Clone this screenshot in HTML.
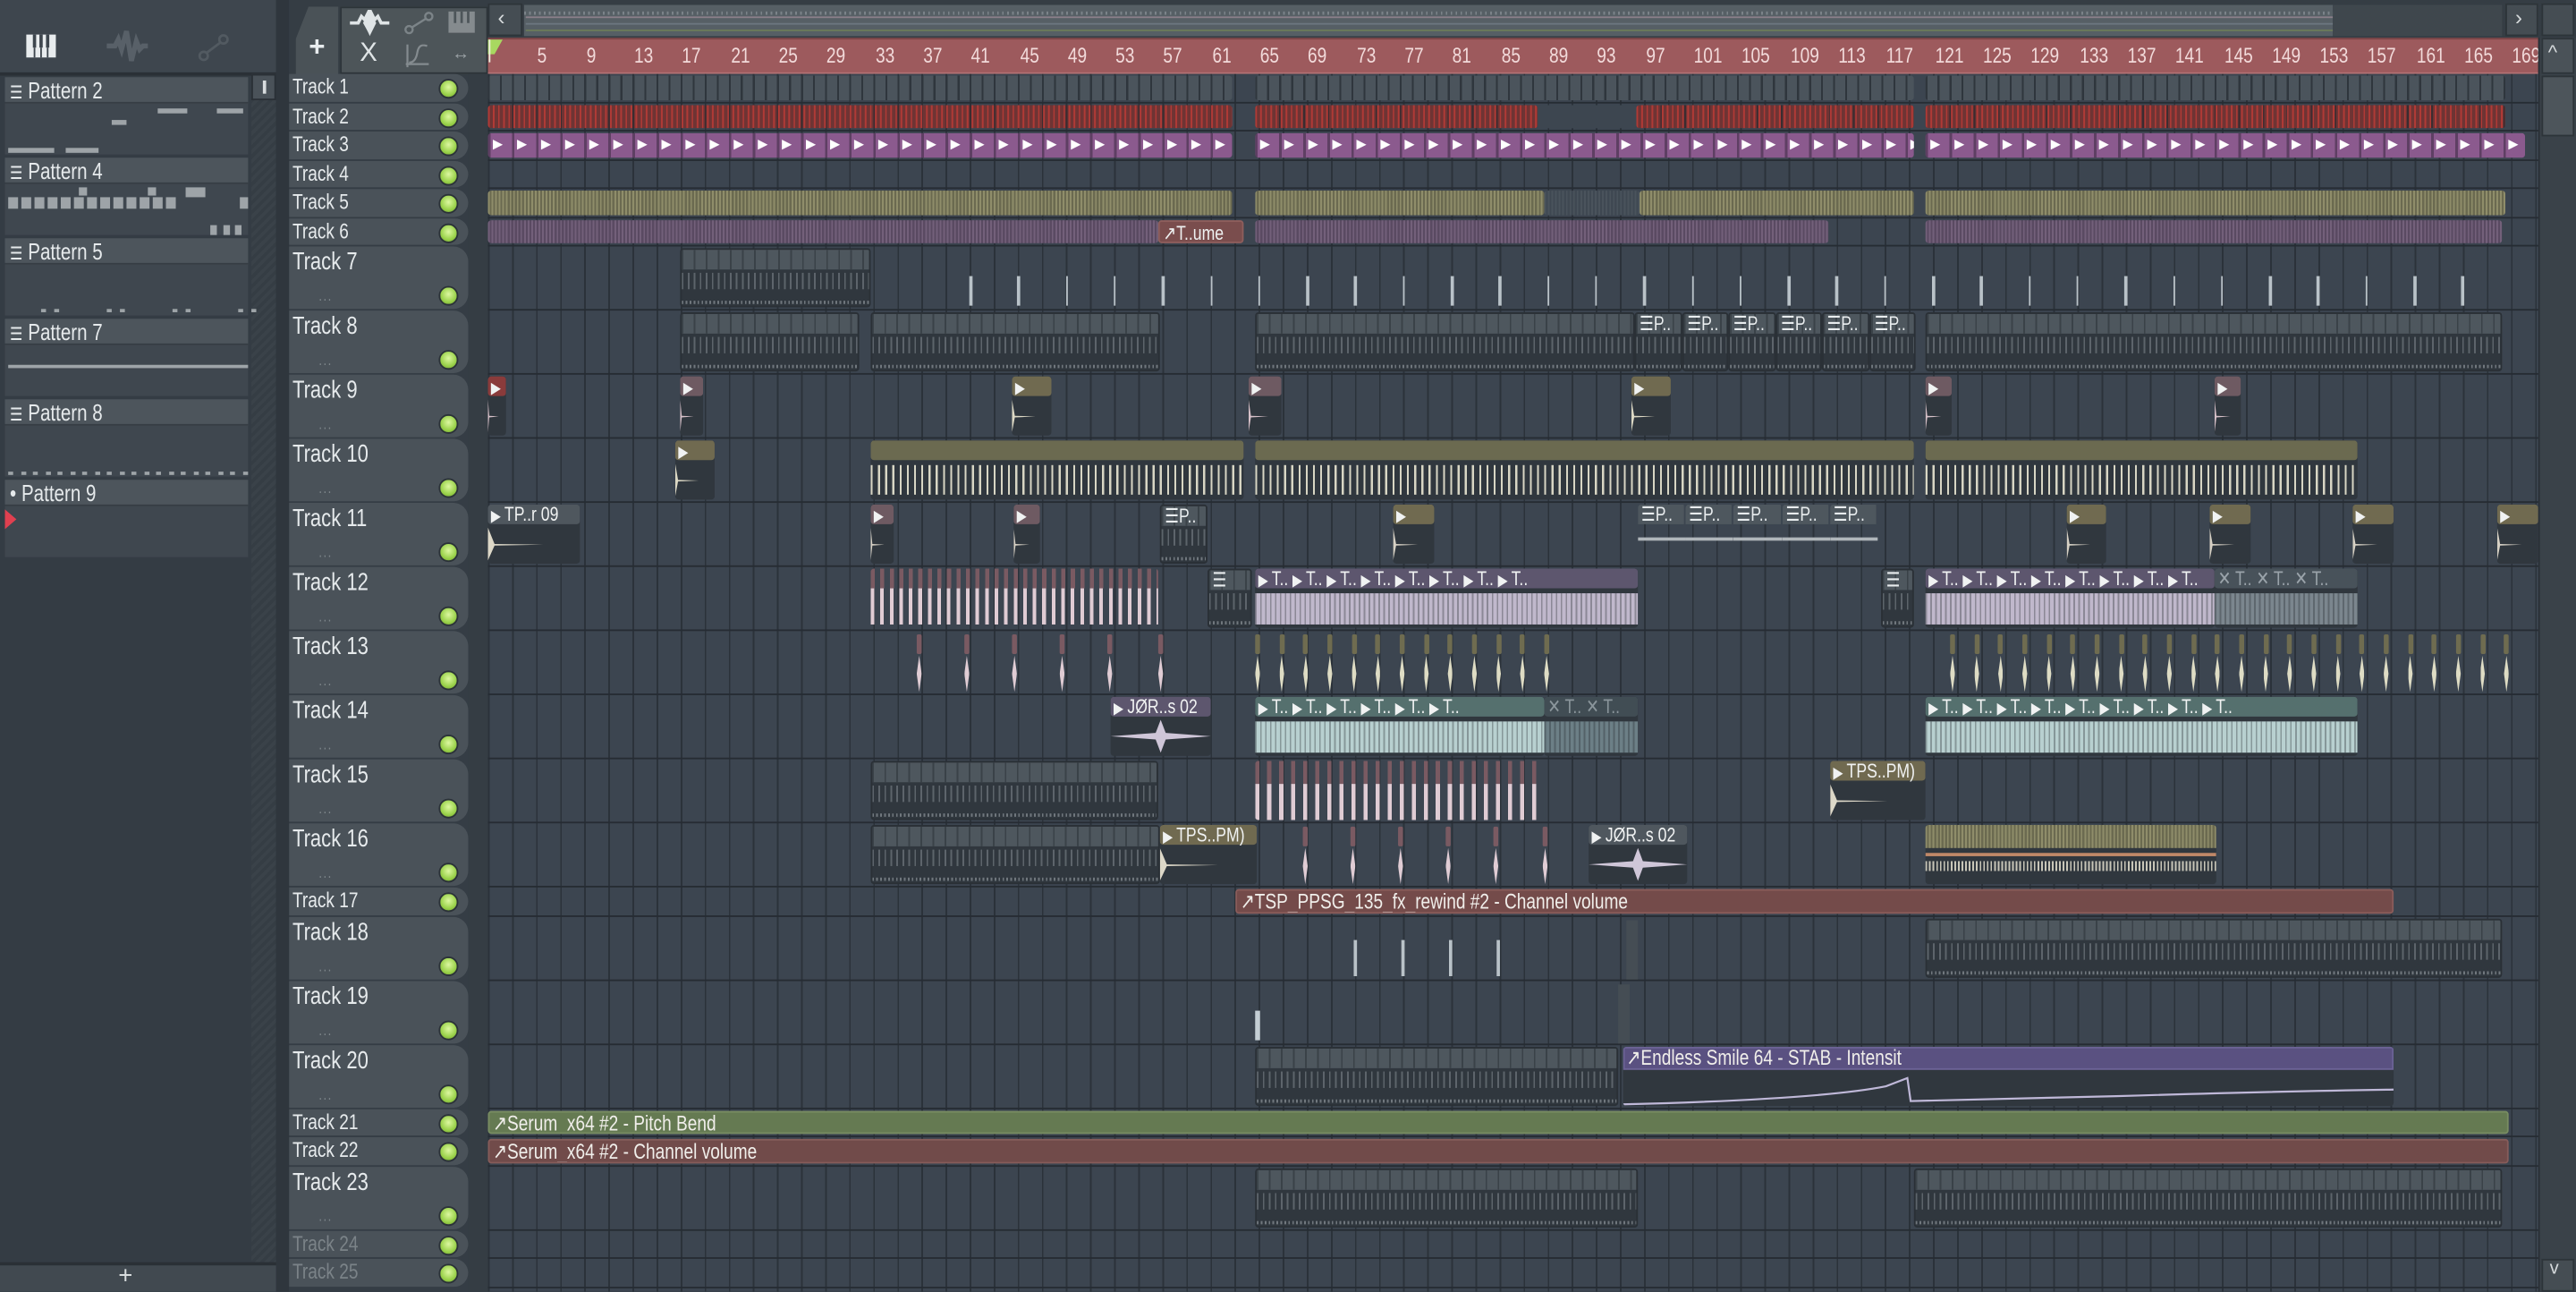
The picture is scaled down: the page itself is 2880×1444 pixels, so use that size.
<!DOCTYPE html>
<html><head><meta charset="utf-8">
<style>
*{margin:0;padding:0;box-sizing:border-box}
html,body{width:2880px;height:1444px;overflow:hidden;background:#353d45}
#w{position:absolute;left:0;top:0;width:1568px;height:786px;transform:scale(1.836735);transform-origin:0 0;font-family:"Liberation Sans Narrow","Liberation Sans",sans-serif;overflow:hidden;background:#353d45}
.a{position:absolute}
.t{color:#e4e8ea;white-space:nowrap;overflow:hidden}
.sx{display:inline-block;transform:scaleX(.8);transform-origin:0 50%;white-space:nowrap}
#grid{position:absolute;left:297px;top:45px;width:1248px;height:741px;background-color:#3c4550;
background-image:repeating-linear-gradient(90deg,#2b323a 0 1px,transparent 1px 14.66px);}
</style></head><body><div id="w">

<!-- left panel -->
<div class="a" style="left:0;top:0;width:176px;height:46px;background:#3e464e;border-bottom:2px solid #2a3036"></div>
<svg class="a" style="left:15px;top:20px" width="20" height="16" viewBox="0 0 20 16"><path d="M1 1h18v14H1z" fill="#e8ecee"/><path d="M6 1v8M10 1v8M14 1v8" stroke="#3e464e" stroke-width="2"/><path d="M6 9v6M10 9v6M14 9v6" stroke="#3e464e" stroke-width="1"/></svg>
<svg class="a" style="left:64px;top:18px" width="26" height="20" viewBox="0 0 26 20"><path d="M1 10h5l2-4 2 6 3-11 3 18 3-12 2 5 2-2h4" stroke="#586068" stroke-width="3" fill="none"/></svg>
<svg class="a" style="left:120px;top:20px" width="20" height="18" viewBox="0 0 20 18"><circle cx="4" cy="14" r="2.5" stroke="#525a61" stroke-width="1.5" fill="none"/><circle cx="16" cy="4" r="2.5" stroke="#525a61" stroke-width="1.5" fill="none"/><path d="M6 12l8-6" stroke="#525a61" stroke-width="1.5"/></svg>
<div class="a" style="left:0;top:46px;width:168px;height:722px;background:#343c44"></div>
<div class="a" style="left:153px;top:46px;width:15px;height:722px;background:repeating-linear-gradient(135deg,#3a4249 0 2px,#353d44 2px 4px)"></div>
<div class="a" style="left:153px;top:45px;width:15px;height:16px;background:#4a5259;border:1px solid #2a3036"><div class="a" style="left:6px;top:3px;width:2px;height:8px;background:#d8dcde"></div></div>
<div id="pl"></div>
<div class="a" style="left:0;top:768px;width:176px;height:18px;background:#414950;border-top:2px solid #2a3036"></div>
<div class="a t" style="left:72px;top:768px;font-size:15px;color:#d8dcde">+</div>
<div class="a" style="left:168px;top:0;width:8px;height:786px;background:#2f363d"></div>

<!-- playlist toolbar -->
<div class="a" style="left:176px;top:0;width:1392px;height:46px;background:#353d44"></div>
<div class="a" style="left:180px;top:4px;width:26px;height:44px;background:#4a5257;border-radius:7px 0 0 0;clip-path:polygon(30% 0,100% 0,100% 100%,0 100%,0 45%)"></div>
<div class="a t" style="left:188px;top:19px;font-size:17px;font-weight:bold;color:#e8ecee;font-family:'Liberation Sans',sans-serif">+</div>
<div class="a" style="left:207px;top:4px;width:90px;height:41px;background:#4d5559;border:1px solid #2d3439"></div>
<svg class="a" style="left:212px;top:6px" width="26" height="16" viewBox="0 0 26 16"><path d="M1 8h5l2-4 2 2 3-6 3 6 2-2 2 4h5" stroke="#dfe4e6" stroke-width="2" fill="none"/><path d="M9 8q4-9 4-8q0 1 4 8q-4 8-4 8q0-1-4-8z" fill="#dfe4e6"/></svg>
<svg class="a" style="left:246px;top:7px" width="18" height="14" viewBox="0 0 18 14"><circle cx="3" cy="11" r="2.2" stroke="#7c8488" stroke-width="1.3" fill="none"/><circle cx="15" cy="3" r="2.2" stroke="#7c8488" stroke-width="1.3" fill="none"/><path d="M5 9.5l8-5" stroke="#7c8488" stroke-width="1.3"/></svg>
<svg class="a" style="left:272px;top:6px" width="18" height="14" viewBox="0 0 18 14"><path d="M1 1h16v13H1z" fill="#858b8e"/><path d="M5 1v7M9 1v7M13 1v7" stroke="#4d5559" stroke-width="1.5"/></svg>
<div class="a t" style="left:219px;top:24px;font-size:16px;color:#dfe4e6">X</div>
<svg class="a" style="left:246px;top:27px" width="16" height="14" viewBox="0 0 16 14"><path d="M2 0v14M1 12h14M3 11q4 0 5-6t6-4" stroke="#848b8f" stroke-width="1.2" fill="none"/></svg>
<div class="a t" style="left:275px;top:27px;font-size:11px;color:#9aa1a5">&#8596;</div>
<div class="a" style="left:297px;top:2px;width:21px;height:20px;background:#454d53;border:1px solid #2d3439"></div>
<div class="a t" style="left:303px;top:3px;font-size:13px;color:#d6dadc">&lsaquo;</div>
<div class="a" style="left:319px;top:3px;width:1101px;height:19px;background:#565f65;background-image:repeating-linear-gradient(90deg,#7b8389 0 1px,transparent 1px 3px);background-size:100% 2px;background-repeat:no-repeat;background-position:0 4px"></div>
<div class="a" style="left:320px;top:10px;width:1100px;height:1px;background:#8a7f8a"></div>
<div class="a" style="left:320px;top:14px;width:1100px;height:1px;background:#6c7680"></div>
<div class="a" style="left:320px;top:18px;width:1100px;height:1px;background:#6b7a5a"></div>
<div class="a" style="left:1420px;top:3px;width:103px;height:19px;background:#3f474d"></div>
<div class="a" style="left:1525px;top:2px;width:20px;height:20px;background:#454d53;border:1px solid #2d3439"></div>
<div class="a t" style="left:1531px;top:3px;font-size:13px;color:#d6dadc">&rsaquo;</div>
<div class="a" style="left:1547px;top:2px;width:20px;height:20px;background:#454d53;border:1px solid #2d3439"></div>

<!-- ruler -->
<div class="a" style="left:297px;top:23px;width:1248px;height:22px;background:#9d5a5d;border-bottom:1px solid #b27174;border-top:1px solid #7b4547"></div>
<div id="ruler"></div>
<svg class="a" style="left:297px;top:24px" width="10" height="14" viewBox="0 0 10 14"><path d="M0 0h9l-5 9H0z" fill="#a8d860"/><path d="M1 0v14" stroke="#f0f0e0" stroke-width="1"/></svg>
<!-- right scrollbar -->
<div class="a" style="left:1545px;top:23px;width:23px;height:763px;background:#3a4249;border-left:1px solid #2a3036"></div>
<div class="a" style="left:1547px;top:23px;width:20px;height:22px;background:#4a5258;border:1px solid #2d3439"></div>
<div class="a t" style="left:1551px;top:25px;font-size:12px;color:#d6dadc">^</div>
<div class="a" style="left:1547px;top:46px;width:20px;height:37px;background:#4d555b;border:1px solid #2d3439"></div>
<div class="a" style="left:1547px;top:766px;width:20px;height:20px;background:#454d53;border:1px solid #2d3439"></div>
<div class="a t" style="left:1552px;top:766px;font-size:11px;color:#d6dadc">v</div>

<div class="a" style="left:285px;top:45px;width:12px;height:741px;background:#353d44"></div>
<div id="grid"></div>
<div id="hds"></div>

<script>
var W=document.getElementById('w');
function el(p,css,html){var d=document.createElement('div');d.style.cssText=css;if(html){if(css.indexOf('font-size')>=0)d.innerHTML='<span class="sx">'+html+'</span>';else d.innerHTML=html;}p.appendChild(d);return d}
var AR='<b style="font-size:9px">&#9654;</b>';
// ruler
var R=document.getElementById('ruler');
for(var n=5;n<=169;n+=4){var x=297+(n-1)*7.33;el(R,'position:absolute;left:'+(x+1)+'px;top:26px;font-size:13px;color:#f2dada;white-space:nowrap',String(n));}
// rows
var rows=[],y=45;
var H=[17.5,17.5,17.5,17.5,17.5,17.5,39,39,39,39,39,39,39,39,39,39,17.5,39,39,39,17.5,17.5,39,17.5,17.5];
for(var i=0;i<25;i++){rows.push([y,H[i]]);y+=H[i];}
var G=document.getElementById('grid'),HD=document.getElementById('hds');
rows.forEach(function(r,i){
 el(G,'position:absolute;left:0;top:'+(r[0]-45+r[1]-1)+'px;width:1248px;height:1px;background:#262c33');
 var h=el(HD,'position:absolute;left:176px;top:'+r[0]+'px;width:109px;height:'+(r[1]-1)+'px;background:#4a5259;border-radius:0 9px 9px 0');
 var small=r[1]<20, dim=i>=23;
 el(h,'position:absolute;left:2px;top:'+(small?0:1)+'px;font-size:'+(small?13:15)+'px;color:'+(dim?'#7b8388':'#e6eaec')+';white-space:nowrap','Track '+(i+1));
 el(h,'position:absolute;left:91px;top:'+(small?3:24)+'px;width:12px;height:12px;border-radius:50%;background:radial-gradient(circle at 50% 40%,#dcf7a0,#9ad24a 60%,#6c9a2c);border:1.5px solid #2b3238');
 if(!small)el(h,'position:absolute;left:18px;top:25px;font-size:9px;color:#7f878c;letter-spacing:1px','...');
});
function X(d){return d-297}
function C(t,x1,x2,bg,extra,html){var r=rows[t-1];return el(G,'position:absolute;left:'+X(x1)+'px;top:'+(r[0]-45+1)+'px;width:'+(x2-x1)+'px;height:'+(r[1]-3)+'px;border-radius:2px;overflow:hidden;background:'+bg+';'+(extra||''),html||'');}
function stripes(c,p,w){return 'repeating-linear-gradient(90deg,'+c+' 0 '+w+'px,transparent '+w+'px '+p+'px)'}
[[297,750],[764,1165],[1172,1525]].forEach(function(s){C(1,s[0],s[1],'#4b545c','background-image:'+stripes('#2f363d',7.33,1.2))});
[[297,750],[764,936],[996,1165],[1172,1525]].forEach(function(s){C(2,s[0],s[1],'#6e3434','background-image:'+stripes('#b03a36',3.1,1)+','+stripes('#3a2c30',14.66,1))});
C(2,936,996,'#3d4650');
[[297,750],[764,1165],[1172,1537]].forEach(function(s){var c=C(3,s[0],s[1],'#8b5a8e','background-image:'+stripes('#5e3f63',14.66,1.5));var t='';for(var k=0;k<(s[1]-s[0])/14.66;k++)t+='<span style="position:absolute;left:'+(k*14.66+3)+'px;top:2px;font-size:8px;color:#fff">&#9654;</span>';c.innerHTML=t;});
[[297,750],[764,940],[998,1165],[1172,1525]].forEach(function(s){C(5,s[0],s[1],'#6b6a50','background-image:'+stripes('#8f8d6a',2.2,1))});
C(5,940,998,'#3f4852','background-image:'+stripes('#4a535c',2.2,1));
[[297,705],[764,1113],[1172,1523]].forEach(function(s){C(6,s[0],s[1],'#5a4a62','background-image:'+stripes('#73607a',2.2,1))});
(function(){var c=C(6,705,757,'#7a4d4d','border:1px solid #8e5e5c');el(c,'position:absolute;left:2px;top:0;font-size:12px;color:#eef0f0;white-space:nowrap','&#8599;T..ume')})();
function P(t,x1,x2,label,col){var c=C(t,x1,x2,'#30373e','border:1px solid #2a3036');
 el(c,'position:absolute;left:0;top:0;right:0;height:12px;background:'+(col||'#4e575e')+';background-image:'+stripes('#3a4248',7.33,1)+'');
 el(c,'position:absolute;left:0;top:14px;right:0;height:10px;background-image:'+stripes('#8a9298',3.66,1)+';opacity:.5');
 el(c,'position:absolute;left:0;bottom:1px;right:0;height:2px;background-image:'+stripes('#9aa2a7',2.4,1)+';opacity:.6');
 if(label)el(c,'position:absolute;left:2px;top:-1px;font-size:12px;color:#e8ecee;white-space:nowrap',label);return c;}
function A(t,x1,x2,hc,wc,label,wave){var c=C(t,x1,x2,'#30373e','');
 el(c,'position:absolute;left:0;top:0;right:0;height:12px;background:'+hc+';border-radius:2px');
 if(label)el(c,'position:absolute;left:2px;top:-1px;font-size:12px;color:#f0f2f2;white-space:nowrap',label);
 if(wave=='full')el(c,'position:absolute;left:0;right:0;top:15px;height:19px;background:'+wc+';background-image:'+stripes('rgba(40,45,50,.35)',3,1));
 else if(wave=='hit')el(c,'position:absolute;left:0;top:14px;width:60%;height:20px;background:'+wc+';clip-path:polygon(0 0,12% 50%,100% 52%,12% 55%,0 100%)');
 else if(wave=='mid')el(c,'position:absolute;left:0;right:0;top:14px;height:20px;background:'+wc+';clip-path:polygon(0 50%,45% 40%,50% 0,55% 40%,100% 50%,55% 60%,50% 100%,45% 60%)');
 return c;}
P(7,414,530,'');
for(var x=590;x<1525;x+=29.3){if(x>750&&x<764)continue;el(G,'position:absolute;left:'+X(x)+'px;top:'+(rows[6][0]-45+18)+'px;width:1.5px;height:18px;background:#b9c2c8')}
P(8,414,523,'');P(8,530,706,'');P(8,764,995,'');
for(var k=0;k<6;k++)P(8,995+k*28.5,995+(k+1)*28.5,'&#9776;P..');
P(8,1172,1523,'');
[[297,308,'#8a3b3b','#d6c0c8'],[414,428,'#6e5a62','#d6c0c8'],[616,640,'#706a50','#dcd8c4'],[760,780,'#6e5a62','#d6c0c8'],[993,1017,'#706a50','#dcd8c4'],[1172,1188,'#6e5a62','#d6c0c8'],[1348,1364,'#6e5a62','#d6c0c8']].forEach(function(s){A(9,s[0],s[1],s[2],s[3],AR,'hit')});
A(10,411,435,'#706a50','#dcd8c4',AR,'hit');
[[530,757],[764,1165],[1172,1435]].forEach(function(s){var c=A(10,s[0],s[1],'#6b6a50','#dcd8c4','','');el(c,'position:absolute;left:0;right:0;top:15px;height:18px;background-image:'+stripes('#d8d6c4',4.4,1.2))});
A(11,297,353,'#4f575e','#ddd8c8',AR+' TP..r 09','hit');
[[530,544,'#6e5a62'],[617,633,'#6e5a62'],[848,873,'#706a50'],[1258,1282,'#706a50'],[1345,1370,'#706a50'],[1432,1457,'#706a50'],[1520,1545,'#706a50']].forEach(function(s){A(11,s[0],s[1],s[2],'#d6d0c4',AR,'hit')});
P(11,706,735,'&#9776;P..');
for(var k=0;k<5;k++){var c=C(11,997+k*29.2,997+(k+1)*29.2,'transparent','');el(c,'position:absolute;left:0;top:0;right:1px;height:12px;background:#4e575e');el(c,'position:absolute;left:2px;top:-1px;font-size:12px;color:#e8ecee','&#9776;P..');el(c,'position:absolute;left:0;right:0;top:20px;height:2px;background:#b0b6ba');}
(function(){var c=C(12,530,705,'transparent','');el(c,'position:absolute;left:0;right:0;top:0;height:12px;background-image:'+stripes('#7a5a62',5.8,2.5));el(c,'position:absolute;left:0;right:0;top:12px;height:22px;background-image:'+stripes('#e0ccd4',5.8,2.2))})();
P(12,735,762,'&#9776;');
var TT=''; for(var k=0;k<8;k++)TT+=AR+' T.. ';
A(12,764,997,'#5d566e','#c0b8cc',TT,'full');
P(12,1145,1165,'&#9776;');
A(12,1172,1348,'#5d566e','#c0b8cc',TT,'full');
A(12,1348,1435,'#48525a','#7b868e','<span style="color:#9aa3aa">&#10005; T.. &#10005; T.. &#10005; T..</span>','full');
function spikes(t,xs,hc,wc){xs.forEach(function(x){var r=rows[t-1];el(G,'position:absolute;left:'+X(x)+'px;top:'+(r[0]-45+2)+'px;width:3px;height:12px;background:'+hc+';border-radius:1px');el(G,'position:absolute;left:'+X(x)+'px;top:'+(r[0]-45+15)+'px;width:3px;height:22px;background:'+wc+';clip-path:polygon(50% 0,100% 50%,50% 100%,0 50%)')})}
spikes(13,[558,587,616,645,674,705],'#7a5a62','#e0ccd4');
var xs=[];for(var x=764;x<940;x+=14.66)xs.push(x);for(var x=1187;x<1525;x+=14.66)xs.push(x);spikes(13,xs,'#6f6c50','#dedcc4');
A(14,676,737,'#5d566e','#cfc6d8',AR+' J&Oslash;R..s 02','mid');
var T6='';for(var k=0;k<6;k++)T6+=AR+' T.. ';
A(14,764,940,'#55706e','#b8d0d0',T6,'full');
A(14,940,997,'#414d54','#6c7f86','<span style="color:#8a959b">&#10005; T.. &#10005; T..</span>','full');
var T9='';for(var k=0;k<9;k++)T9+=AR+' T.. ';
A(14,1172,1435,'#55706e','#b8d0d0',T9,'full');
P(15,530,705,'');
(function(){var c=C(15,764,940,'transparent','');el(c,'position:absolute;left:0;right:0;top:0;height:14px;background-image:'+stripes('#7a5a62',7.33,2.5));el(c,'position:absolute;left:0;right:0;top:14px;height:22px;background-image:'+stripes('#e0ccd4',7.33,2.5))})();
A(15,1114,1172,'#706a50','#ddd8c8',AR+' TPS..PM)','hit');
P(16,530,706,'');
A(16,706,765,'#706a50','#ddd8c8',AR+' TPS..PM)','hit');
spikes(16,[793,822,851,880,909,939],'#7a5a62','#e0ccd4');
A(16,967,1027,'#4f575e','#cfc6d8',AR+' J&Oslash;R..s 02','mid');
(function(){var c=C(16,1172,1349,'#30373e','');el(c,'position:absolute;left:0;right:0;top:0;height:14px;background:#6b6a50;background-image:'+stripes('#8f8d6a',2.2,1));el(c,'position:absolute;left:0;right:0;top:17px;height:2px;background:#c08868');el(c,'position:absolute;left:0;right:0;top:22px;height:6px;background-image:'+stripes('#c8c6b8',2.2,1))})();
function AU(t,x1,x2,bg,label,bd){var c=C(t,x1,x2,bg,'border:1px solid '+bd);el(c,'position:absolute;left:2px;top:-1px;font-size:13px;color:#f0eeea;white-space:nowrap','&#8599;'+label);return c;}
AU(17,752,1457,'#744b4a','TSP_PPSG_135_fx_rewind #2 - Channel volume','#8a5c5a');
P(18,1172,1523,'');
[824,853,882,911].forEach(function(x){el(G,'position:absolute;left:'+X(x)+'px;top:'+(rows[17][0]-45+14)+'px;width:2px;height:22px;background:#b9c2c8')});
el(G,'position:absolute;left:'+X(990)+'px;top:'+(rows[17][0]-45+2)+'px;width:7px;height:36px;background:#454d54');
el(G,'position:absolute;left:'+X(764)+'px;top:'+(rows[18][0]-45+18)+'px;width:3px;height:18px;background:#c4ced4');
el(G,'position:absolute;left:'+X(985)+'px;top:'+(rows[18][0]-45+2)+'px;width:7px;height:36px;background:#454d54');
P(20,764,985,'');
(function(){var c=C(20,988,1457,'#30373e','');el(c,'position:absolute;left:0;right:0;top:0;height:14px;background:#5a5181;border:1px solid #6c6396');el(c,'position:absolute;left:2px;top:-1px;font-size:13px;color:#f0eeea;white-space:nowrap','&#8599;Endless Smile 64 - STAB - Intensit');
c.insertAdjacentHTML('beforeend','<svg style="position:absolute;left:0;top:14px" width="469" height="22"><path d="M0 21Q120 18 160 10 L173 5 L175 19 L300 16 Q400 13 469 12" stroke="#bfb8d8" stroke-width="1.2" fill="none"/></svg>')})();
AU(21,297,1527,'#657a52','Serum_x64 #2 - Pitch Bend','#788c62');
AU(22,297,1527,'#714b4a','Serum_x64 #2 - Channel volume','#865c5a');
P(23,764,997,'');P(23,1165,1523,'');
var PL=document.getElementById('pl');
['Pattern 2','Pattern 4','Pattern 5','Pattern 7','Pattern 8','Pattern 9'].forEach(function(p,i){var y=47+i*49;
 el(PL,'position:absolute;left:3px;top:'+y+'px;width:148px;height:47px;background:#3f474f');
 el(PL,'position:absolute;left:3px;top:'+y+'px;width:148px;height:16px;background:#4d555c;border-bottom:1px solid #363d44');
 el(PL,'position:absolute;left:6px;top:'+(y)+'px;font-size:14px;color:#e6eaec;white-space:nowrap',(i==5?'&#8226; ':'<span style="font-size:11px">&#9776;</span> ')+p);
});
function pb(x,y,w,h){el(PL,'position:absolute;left:'+x+'px;top:'+y+'px;width:'+w+'px;height:'+(h||3)+'px;background:#9ea4a8')}
pb(96,66,18);pb(132,66,16);pb(68,73,9);pb(5,90,28);pb(40,90,20);
for(var k=0;k<13;k++)pb(5+k*8,120,6,7);pb(48,114,5,5);pb(90,114,5,5);pb(113,114,12,6);pb(146,120,5,7);pb(128,137,4,6);pb(136,137,4,6);pb(143,137,4,6);
for(var k=0;k<4;k++){pb(25+k*40,188,3,2);pb(33+k*40,188,3,2);}
pb(5,222,146,2);
for(var k=0;k<20;k++)pb(5+k*7.5,287,3,1.5);
el(PL,'position:absolute;left:3px;top:310px;width:0;height:0;border-left:7px solid #e04050;border-top:6px solid transparent;border-bottom:6px solid transparent');
</script>
</div></body></html>
